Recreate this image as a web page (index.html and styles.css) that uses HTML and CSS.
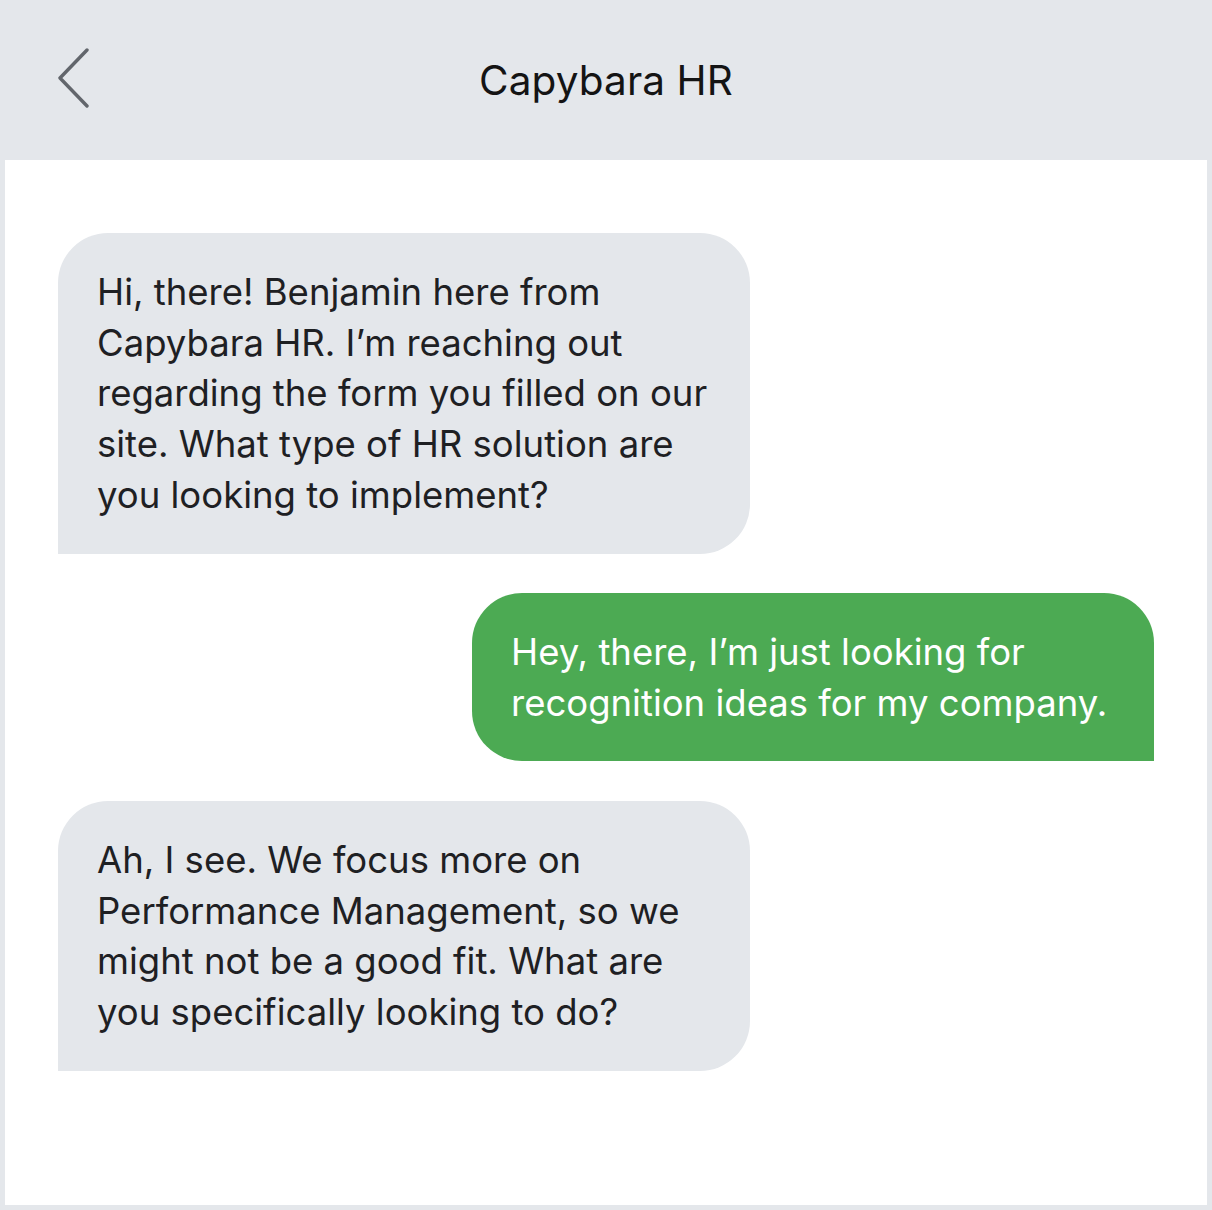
FILE: index.html
```html
<!DOCTYPE html>
<html>
<head>
<meta charset="utf-8">
<link rel="stylesheet" href="styles.css">
</head>
<body>
<div class="app">
  <header class="topbar">
    <svg class="back" width="40" height="64" viewBox="0 0 40 64"><polyline points="29,5 2,33 29,61" fill="none" stroke="#62666c" stroke-width="3.4" stroke-linecap="round" stroke-linejoin="round"/></svg>
    <h1 class="title">Capybara HR</h1>
  </header>
  <main class="chat">
    <div class="bubble in">Hi, there! Benjamin here from<br>Capybara HR. I’m reaching out<br>regarding the form you filled on our<br>site. What type of HR solution are<br>you looking to implement?</div>
    <div class="bubble out">Hey, there, I’m just looking for<br>recognition ideas for my company.</div>
    <div class="bubble in">Ah, I see. We focus more on<br>Performance Management, so we<br>might not be a good fit. What are<br>you specifically looking to do?</div>
  </main>
</div>
</body>
</html>
```

FILE: styles.css
```css
html, body {
  margin: 0;
  padding: 0;
}
body {
  background: #e4e7eb;
  font-family: Inter, "Noto Sans", sans-serif;
  width: 1212px;
  height: 1210px;
  overflow: hidden;
}
.app {
  display: flex;
  flex-direction: column;
  height: 1210px;
}
.topbar {
  position: relative;
  height: 160px;
  display: flex;
  align-items: center;
  justify-content: center;
  background: #e4e7eb;
}
.back {
  position: absolute;
  left: 58px;
  top: 45px;
}
.title {
  margin: 0;
  font-weight: 400;
  font-size: 40.5px;
  color: #141414;
  letter-spacing: 0.1px;
}
.chat {
  flex: 1;
  margin: 0 5px 5px 5px;
  background: #ffffff;
  padding: 73px 53px 0 53px;
  display: flex;
  flex-direction: column;
  gap: 39.5px;
}
.bubble {
  box-sizing: border-box;
  padding: 34px 40px 33px 39px;
  font-size: 36.5px;
  line-height: 50.7px;
  white-space: nowrap;
  border-radius: 50px;
}
.bubble.in {
  width: 692px;
  align-self: flex-start;
  background: #e4e7eb;
  color: #1e2023;
  border-bottom-left-radius: 0;
}
.bubble.out {
  width: 682px;
  align-self: flex-end;
  background: #4caa53;
  color: #ffffff;
  border-bottom-right-radius: 0;
}
```
